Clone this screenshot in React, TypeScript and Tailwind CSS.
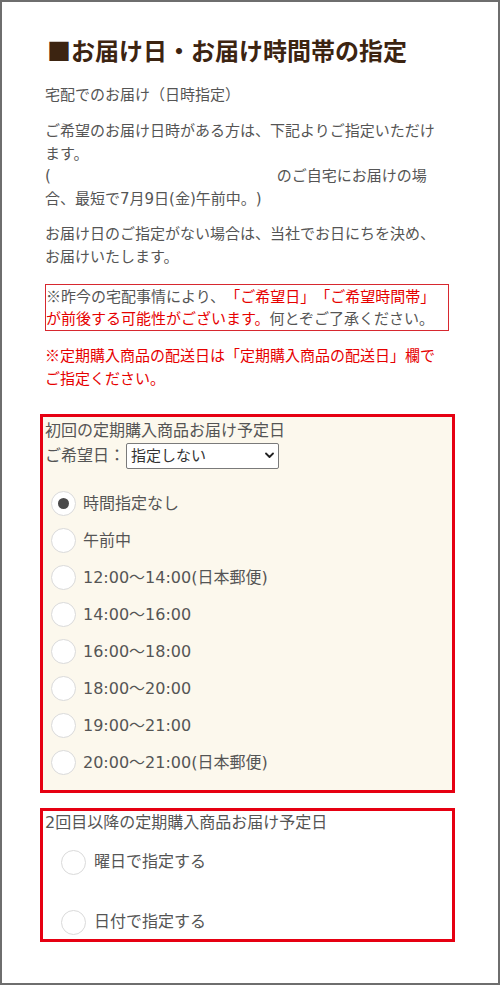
const FONT = "font-['DejaVu_Sans','Noto_Sans_CJK_JP',sans-serif]";
const CJK = "font-['Noto_Sans_CJK_JP',sans-serif]";

const firstTimes = [
  "時間指定なし",
  "午前中",
  "12:00～14:00(日本郵便)",
  "14:00～16:00",
  "16:00～18:00",
  "18:00～20:00",
  "19:00～21:00",
  "20:00～21:00(日本郵便)",
];

function Radio({ checked }: { checked?: boolean }) {
  return (
    <span className="w-[25px] h-[25px] rounded-full bg-white border-[1.5px] border-[#dadada] flex items-center justify-center flex-shrink-0">
      {checked && <span className="w-[11px] h-[11px] rounded-full bg-[#4a4a4a]" />}
    </span>
  );
}

function RadioRow({ label, checked, className }: { label: string; checked?: boolean; className: string }) {
  return (
    <label className={`flex items-center gap-[7px] ${className}`}>
      <Radio checked={checked} />
      <span className="text-[16px] leading-[24px] text-[#555]">{label}</span>
    </label>
  );
}

export default function App() {
  return (
    <div
      lang="ja"
      className={`w-[500px] h-[985px] border-2 border-[#6e6e6e] bg-white pl-[38px] pt-[30px] [text-spacing-trim:space-all] ${FONT}`}
    >
      {/* heading */}
      <h2 className={`ml-[7px] text-[24px] leading-[36px] font-bold text-[#3c2411] ${CJK}`}>
        ■お届け日・お届け時間帯の指定
      </h2>

      <div className="ml-[5px] w-[404px] text-[15px] leading-[22.5px] text-[#555]">
        <p className="mt-[16px]">宅配でのお届け（日時指定）</p>
        <p className="mt-[13.5px]">
          ご希望のお届け日時がある方は、下記よりご指定いただけます。
          <br />
          (<span className="inline-block w-[226px]" />のご自宅にお届けの場合、最短で7月9日(金)午前中。)
        </p>
        <p className="mt-[13px]">お届け日のご指定がない場合は、当社でお日にちを決め、お届けいたします。</p>

        <p className="mt-[16px] border border-[#d7282f] leading-[22px]">
          <span className={CJK}>※</span>昨今の宅配事情により、
          <span className="text-[#e60000]">「ご希望日」「ご希望時間帯」が前後する可能性がございます。</span>
          何とぞご了承ください。
        </p>

        <p className="mt-[13px] text-[#e60000]">
          <span className={CJK}>※</span>定期購入商品の配送日は「定期購入商品の配送日」欄でご指定ください。
        </p>
      </div>

      {/* first delivery */}
      <div className="mt-[24px] w-[415px] border-[3px] border-[#e60012] bg-[#fcf8ed] pt-[2px] pb-[9px]">
        <p className="pl-[2px] text-[16px] leading-[24px] text-[#555]">初回の定期購入商品お届け予定日</p>
        <div className="flex items-center h-[26px] pl-[2px]">
          <span className="w-[81px] text-[16px] leading-[24px] text-[#555]">ご希望日：</span>
          <div className="relative w-[153px] h-[26px]">
            <select
              defaultValue="none"
              className="w-full h-full appearance-none bg-white border border-[#7a7a7a] rounded-[2px] pl-[4px] text-[15px] text-[#333] outline-none"
            >
              <option value="none">指定しない</option>
            </select>
            <svg className="absolute right-[5px] top-[9px] w-[9px] h-[7px] pointer-events-none" viewBox="0 0 9 7" fill="none">
              <path d="M1 1.5l3.5 3.5L8 1.5" stroke="#222" strokeWidth="1.8" strokeLinecap="round" strokeLinejoin="round" />
            </svg>
          </div>
        </div>
        <div className="mt-[16px] flex flex-col">
          {firstTimes.map((t, i) => (
            <RadioRow key={t} label={t} checked={i === 0} className="h-[37px] pl-[8px]" />
          ))}
        </div>
      </div>

      {/* second and later */}
      <div className="mt-[15px] w-[415px] border-[3px] border-[#e60012] bg-white">
        <p className="pl-[2px] text-[16px] leading-[24px] text-[#555]">2回目以降の定期購入商品お届け予定日</p>
        <RadioRow label="曜日で指定する" className="mt-[10px] h-[34px] pl-[18px] gap-[8px]" />
        <RadioRow label="日付で指定する" className="mt-[26px] h-[34px] pl-[18px] gap-[8px]" />
      </div>
    </div>
  );
}
